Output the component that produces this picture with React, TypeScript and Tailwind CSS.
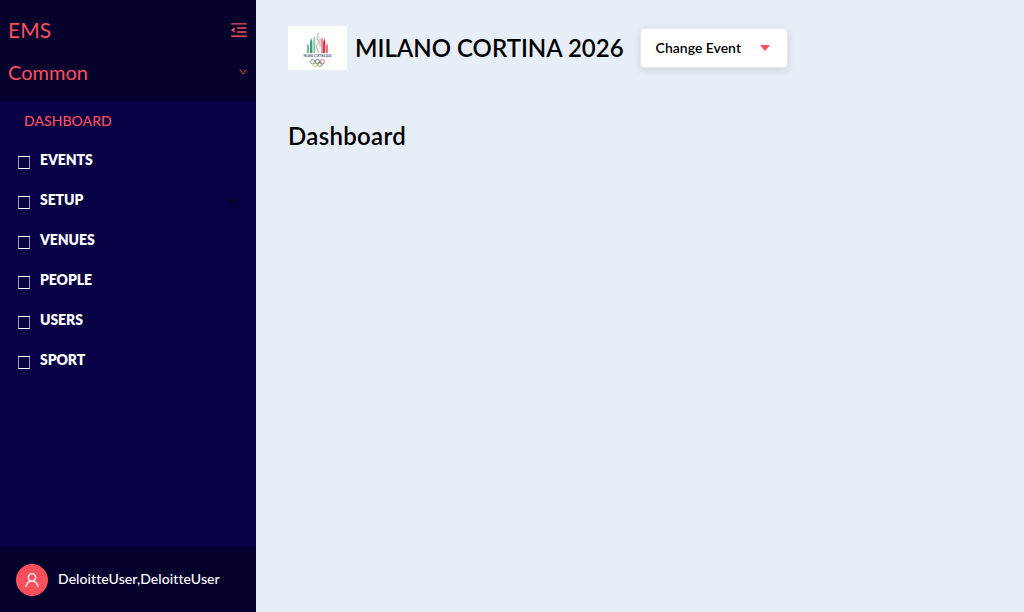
import { AiOutlineMenuFold, AiOutlineDown, AiOutlineUser } from 'react-icons/ai';

const items = ['EVENTS', 'SETUP', 'VENUES', 'PEOPLE', 'USERS', 'SPORT'];

function EventLogo() {
  return (
    <svg className="h-[44px] w-[59px] shrink-0 bg-white" viewBox="0 0 59 44">
      <g>
        <path d="M19 27V20L20 17L21 20V27Z" fill="#74bf9e" />
        <path d="M22 27V16L23.2 12L24.4 16V27Z" fill="#369e70" />
        <path d="M25.3 27V14L26.3 9L27.3 14V27Z" fill="#8fc9b0" />
        <path d="M33 27V14L34 10L35 14V27Z" fill="#e5949a" />
        <path d="M35 27V16L36.2 12L37.4 16V27Z" fill="#d43c4b" />
        <path d="M38 27V20L39 17L40 20V27Z" fill="#de7c84" />
        <path d="M30 7V12M28.5 12L31.5 16L28 20L31 27M32 12V21" fill="none" stroke="#cbc1bd" strokeWidth="1.3" />
      </g>
      <text transform="translate(15.5 31.2) scale(0.62 1)" fontSize="4" fontWeight="900" fill="#53607c" fontFamily="Lato, sans-serif">MILANO CORTINA 2026</text>
      <g fill="none" strokeWidth="0.9">
        <circle cx="24.8" cy="35.8" r="2.2" stroke="#4d91c5" />
        <circle cx="29.5" cy="35.8" r="2.2" stroke="#666" />
        <circle cx="34.2" cy="35.8" r="2.2" stroke="#df5263" />
        <circle cx="27.2" cy="38.2" r="2.2" stroke="#e5b94c" />
        <circle cx="31.8" cy="38.2" r="2.2" stroke="#45a56c" />
      </g>
    </svg>
  );
}

export default function App() {
  return (
    <div className="flex h-screen w-full overflow-hidden bg-[#e7eef7] font-['Lato',sans-serif] text-black [font-variant-ligatures:none]">
      <aside className="flex w-64 shrink-0 flex-col bg-[#080045] text-[#fb505c]">
        <div className="h-[101px] bg-[#06002d] px-2 pt-2">
          <div className="flex h-11 items-center justify-between">
            <span className="text-[21px]">EMS</span>
            <AiOutlineMenuFold size={20} className="-mr-px" />
          </div>
          <div className="flex h-10 items-center justify-between text-xl">
            <span>Common</span>
            <AiOutlineDown size={10} />
          </div>
        </div>
        <nav className="flex-1 text-sm">
          <div className="flex h-10 items-center pl-6 font-medium tracking-[0.05px]">DASHBOARD</div>
          {items.map((item) => (
            <div key={item} className="flex h-10 items-center pr-[18px] pb-0.5 pl-[18px] font-extrabold tracking-[-0.08px] text-white">
              <span className="mt-[5px] mr-[10px] h-[13px] w-3 border border-x-white/60 border-y-white" />
              <span className="flex-1">{item}</span>
              {item === 'SETUP' && (
                <svg width="10" height="7" viewBox="0 0 10 7" className="mt-0.5" fill="none" stroke="#03001f" strokeWidth="2">
                  <path d="M1 1.2l4 3.6 4-3.6" />
                </svg>
              )}
            </div>
          ))}
        </nav>
        <div className="flex h-[65px] items-center gap-[10px] bg-[#06002d] pl-4 text-sm text-white">
          <span className="flex size-8 items-center justify-center rounded-full bg-[#fb505c]">
            <AiOutlineUser size={18} className="mt-px" />
          </span>
          <span className="pb-0.5 font-medium tracking-[0.08px]">DeloitteUser,DeloitteUser</span>
        </div>
      </aside>
      <main className="flex-1 px-8 pt-[26px]">
        <header className="flex h-[44px] items-center">
          <EventLogo />
          <h1 className="ml-2 text-2xl font-semibold">MILANO CORTINA 2026</h1>
          <button className="ml-4 flex h-10 w-[148px] items-center justify-between rounded border border-[#e6e8ec] bg-white pr-[17px] pl-[15px] text-sm font-semibold shadow-[0_2px_8px_rgba(0,0,0,0.12)]">
            Change Event
            <svg width="10" height="6" viewBox="0 0 10 6" fill="#fb505c"><path d="M0 0h10L5 6z" /></svg>
          </button>
        </header>
        <h2 className="mt-[50px] text-2xl font-semibold tracking-[0.32px]">Dashboard</h2>
      </main>
    </div>
  );
}
